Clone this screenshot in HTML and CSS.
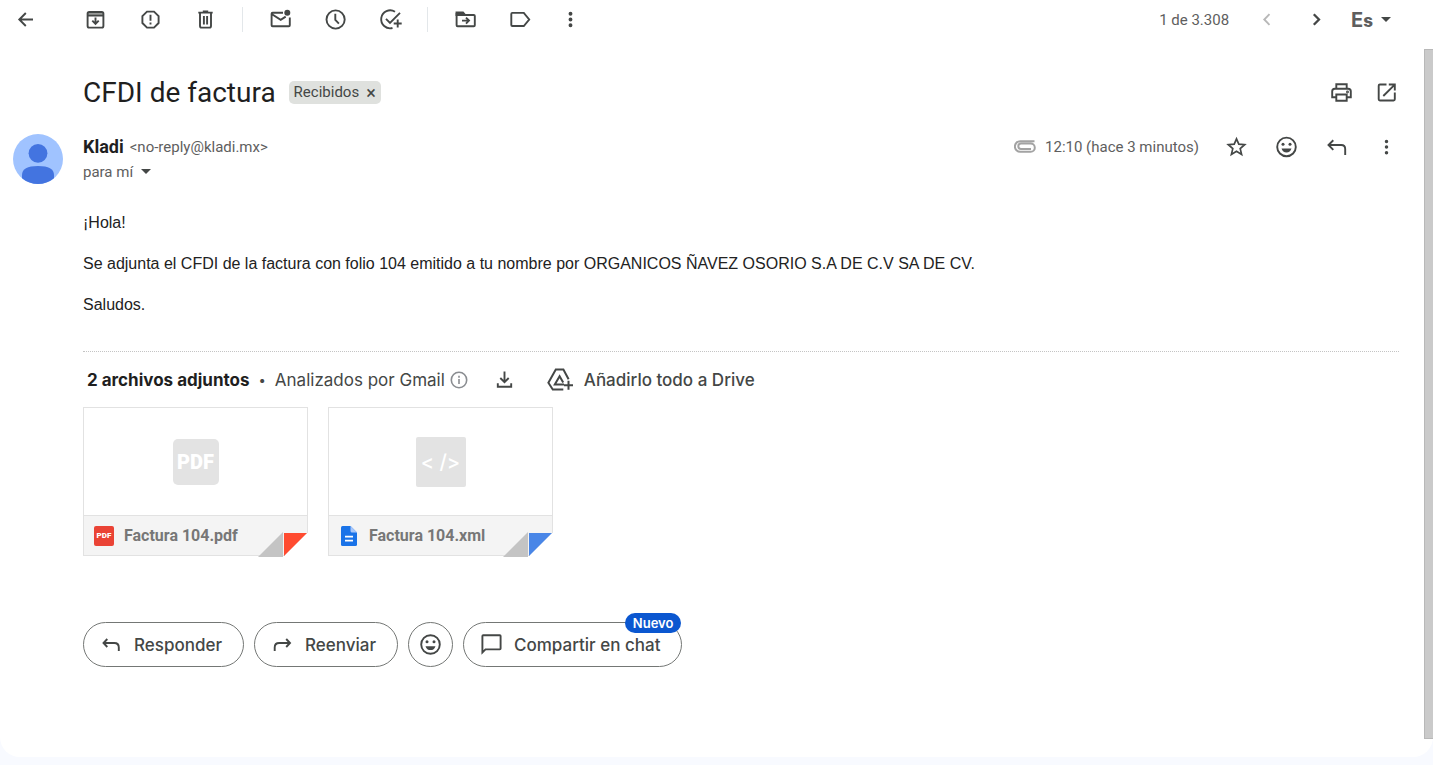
FILE: index.html
```
<!DOCTYPE html>
<html lang="es">
<head>
    <meta charset="UTF-8">
    <meta name="viewport" content="width=device-width, initial-scale=1.0">
    <title>CFDI de factura</title>
    <link rel="stylesheet" href="styles.css">
</head>
<body>
    <div class="panel">
        <!-- Toolbar -->
        <header class="toolbar">
            <button class="icon-btn back" aria-label="Volver"><svg class="icon" viewBox="0 0 25 25"><path d="M20 12.5H6.5M12.8 6l-6.5 6.5 6.5 6.5"/></svg></button>
            <div class="tool-group">
                <button class="icon-btn" aria-label="Archivar"><svg class="icon" viewBox="0 0 25 25"><rect x="4.6" y="5" width="15.8" height="15.6" rx="1.6"/><path d="M5 6.5h15" stroke-width="3" opacity=".55"/><path d="M4.6 8.6h15.8M12.5 10.5v6M9.3 13.7l3.2 3.2 3.2-3.2"/></svg></button>
                <button class="icon-btn" aria-label="Marcar como spam"><svg class="icon" viewBox="0 0 25 25"><path d="M9 4.6h7l4.6 4.6v6.8L16 20.6H9L4.400 16V9.200z"/><path d="M12.500 7.800v6M12.500 15.600v2"/></svg></button>
                <button class="icon-btn" aria-label="Eliminar"><svg class="icon" viewBox="0 0 25 25"><path d="M5.300 5.600h14.400M9.800 4.400h5.400M7 6v13q0 1.600 1.600 1.600h7.800q1.600 0 1.600-1.600V6M10.900 9v8.500M14.100 9v8.500"/></svg></button>
            </div>
            <span class="separator"></span>
            <div class="tool-group">
                <button class="icon-btn" aria-label="Marcar como no leído"><svg class="icon" viewBox="0 0 25 25"><path d="M15 5.800H4.600q-1 0-1 1v11.400q0 1 1 1h16.200q1 0 1-1V10.500M4 7.200l8.700 5.600 5-3.200"/><circle class="dot-mark" cx="19.300" cy="5.700" r="3"/></svg></button>
                <button class="icon-btn" aria-label="Posponer"><svg class="icon" viewBox="0 0 25 25"><circle cx="12.600" cy="12.500" r="9.100"/><path d="M12.300 6.800v6l3.600 3.800"/></svg></button>
                <button class="icon-btn" aria-label="Añadir a Tasks"><svg class="icon" viewBox="0 0 25 25"><path d="M17 4.700A9 9 0 1 0 14.500 21M8 11.800l4 4L22 5.800M19.700 12.500v8M15.700 16.500h8"/></svg></button>
            </div>
            <span class="separator"></span>
            <div class="tool-group">
                <button class="icon-btn" aria-label="Mover a"><svg class="icon" viewBox="0 0 25 25"><path class="solid" d="M3.500 5.500h6.500l2.200 2.600H3.500z"/><path d="M3.600 6v12.300q0 1 1 1h16.200q1 0 1-1V9q0-1-1-1H4M9 13.600h6.800M13 10.600l3 3-3 3"/></svg></button>
                <button class="icon-btn" aria-label="Etiquetas"><svg class="icon" viewBox="0 0 25 25"><path d="M4.300 5.900h11.500l5.400 6.600-5.400 6.500H4.300q-1 0-1-1V6.900q0-1 1-1z"/></svg></button>
            </div>
            <button class="icon-btn more" aria-label="Más"><svg class="icon" viewBox="0 0 25 25"><g class="solid"><circle cx="12.500" cy="6.700" r="1"/><circle cx="12.500" cy="12.500" r="1"/><circle cx="12.500" cy="18.300" r="1"/></g></svg></button>
            <div class="pager">
                <span>1 de 3.308</span>
                <button class="icon-btn" aria-label="Más reciente" disabled><svg class="icon" viewBox="0 0 25 25"><path d="M15.500 7.200l-5.200 5.300 5.200 5.300"/></svg></button>
                <button class="icon-btn" aria-label="Anterior"><svg class="icon" viewBox="0 0 25 25"><path d="M9.800 7.200l5.200 5.300-5.200 5.300" stroke-width="2.300"/></svg></button>
                <button class="language" aria-label="Herramientas de introducción de texto"><b>E<small>s</small></b><i class="caret"></i></button>
            </div>
        </header>

        <!-- Message -->
        <div class="scroll-area">
            <main class="message">
                <div class="subject">
                    <h1>CFDI de factura</h1>
                    <span class="chip"><a href="#">Recibidos</a><button aria-label="Quitar etiqueta">×</button></span>
                    <div class="subject-actions">
                        <button class="icon-btn" aria-label="Imprimir"><svg class="icon" viewBox="0 0 25 25"><path d="M7.300 8.500V4.300h10.400v4.200M6.500 17.300H3.200v-6q0-2.600 2.600-2.600h13.400q2.600 0 2.600 2.600v6h-3.300M7.300 14.500h10.400v6.200H7.300z"/><circle class="solid" cx="18.500" cy="12" r=".5"/></svg></button>
                        <button class="icon-btn" aria-label="Abrir en ventana nueva"><svg class="icon" viewBox="0 0 25 25"><path d="M12.500 4.500h-6.600q-1.200 0-1.200 1.200v13.600q0 1.200 1.200 1.200h13.700q1.200 0 1.200-1.200v-6.800M14.800 4.500h6v6M20.500 4.800L9.300 16"/></svg></button>
                    </div>
                </div>

                <div class="sender">
                    <svg class="avatar" viewBox="0 0 50 50">
                        <circle cx="25" cy="25" r="25" fill="#a0c3ff"/>
                        <circle cx="25" cy="19.300" r="9.400" fill="#4374e0"/>
                        <path d="M9 44.200V41q0-9 16-9t16 9v3.200A25 25 0 0 1 9 44.200z" fill="#4374e0"/>
                    </svg>
                    <div class="sender-info">
                        <div class="sender-name"><strong>Kladi</strong><span>&lt;no-reply@kladi.mx&gt;</span></div>
                        <button class="recipient">para mí<i class="caret"></i></button>
                    </div>
                    <div class="sender-actions">
                        <svg class="clip" viewBox="0 0 22 13"><path d="M20.500 1.200H6.200a5.200 5.200 0 0 0 0 10.600h10.500a4 4 0 0 0 0-8.200H7a2.700 2.700 0 0 0 0 5.400h10"/></svg>
                        <time>12:10 (hace 3 minutos)</time>
                        <button class="icon-btn" aria-label="Destacar"><svg class="icon" viewBox="0 0 25 25"><path d="M12.500 4.800l2.300 5.400 5.900.5-4.500 3.900 1.400 5.800-5.100-3.100-5.100 3.100 1.400-5.800-4.500-3.900 5.900-.5z" stroke-width="1.700"/></svg></button>
                        <button class="icon-btn" aria-label="Reaccionar"><svg class="icon" viewBox="0 0 25 25"><circle cx="12.500" cy="12.900" r="9.300"/><g class="face"><circle cx="9" cy="10.200" r="1.500"/><circle cx="16" cy="10.200" r="1.500"/><path d="M7.500 14.600h10q-1.300 3.900-5 3.900t-5-3.900z"/></g></svg></button>
                        <button class="icon-btn" aria-label="Responder"><svg class="icon" viewBox="0 0 25 25"><path d="M9.300 6.300L4.500 11l4.800 4.800M4.800 11h12.400q4 0 4 4v6"/></svg></button>
                        <button class="icon-btn" aria-label="Más opciones"><svg class="icon" viewBox="0 0 25 25"><g class="solid"><circle cx="12.500" cy="7.500" r=".8"/><circle cx="12.500" cy="13" r=".8"/><circle cx="12.500" cy="18.700" r=".8"/></g></svg></button>
                    </div>
                </div>

                <div class="message-body">
                    <p>¡Hola!</p>
                    <p>Se adjunta el CFDI de la factura con folio 104 emitido a tu nombre por ORGANICOS ÑAVEZ OSORIO S.A DE C.V SA DE CV.</p>
                    <p>Saludos.</p>
                </div>

                <!-- Attachments -->
                <section class="attachments">
                    <div class="attachments-header">
                        <h2>2 archivos adjuntos</h2>
                        <span class="dot">•</span>
                        <span>Analizados por Gmail</span>
                        <svg class="info" viewBox="0 0 18 18"><circle cx="9" cy="9" r="7.700"/><path d="M9 8v5M9 4.800v2"/></svg>
                        <button class="icon-btn" aria-label="Descargar todo"><svg class="icon" viewBox="0 0 25 25"><path d="M12.500 4.500v10.500M8.300 11l4.200 4.200 4.200-4.200M5.800 16.300v3.500h13.400v-3.500"/></svg></button>
                        <button class="drive"><svg viewBox="0 0 28 25"><path d="M17.300 22.500H6.800L2.400 15.800 9.800 2.500h7.600l5.200 9.700M18 17.500H8.800l4.800-8.300 3.600 6.300M22.500 13.700v9M18 18.200h9" /></svg>Añadirlo todo a Drive</button>
                    </div>
                    <div class="cards">
                        <a class="card" href="#">
                            <div class="preview"><span class="type-pdf">PDF</span></div>
                            <div class="card-name">
                                <span class="badge-pdf">PDF</span>
                                <span>Factura 104.pdf</span>
                            </div>
                            <svg class="fold red" viewBox="0 0 50 26"><path d="M0 25L25 0v25z" fill="#c4c4c4"/><path class="flap" d="M26 1h23L26 24z"/></svg>
                        </a>
                        <a class="card" href="#">
                            <div class="preview"><span class="type-xml">&lt; /&gt;</span></div>
                            <div class="card-name">
                                <svg class="doc" viewBox="0 0 20 20"><path d="M3.500 0h8L18 6.500v12q0 1.500-1.500 1.500h-13Q2 20 2 18.500v-17Q2 0 3.500 0z" fill="#1a73e8"/><path d="M11.500 0v5q0 1.500 1.500 1.500h5z" fill="#a8c7fa"/><path d="M6 10.600h8M6 14.700h8" stroke="#fff" stroke-width="1.800"/></svg>
                                <span>Factura 104.xml</span>
                            </div>
                            <svg class="fold blue" viewBox="0 0 50 26"><path d="M0 25L25 0v25z" fill="#c4c4c4"/><path class="flap" d="M26 1h23L26 24z"/></svg>
                        </a>
                    </div>
                </section>

                <!-- Reply buttons -->
                <div class="replies">
                    <button class="pill"><svg class="icon" viewBox="0 0 25 25"><path d="M8.300 7L4.500 11l3.800 4M4.800 11h10.500q4.500 0 4.500 4.500v3.500"/></svg>Responder</button>
                    <button class="pill"><svg class="icon" viewBox="0 0 25 25"><path d="M16.200 7l3.800 4-3.800 4M19.700 11H9.200q-4.500 0-4.500 4.500v3.500"/></svg>Reenviar</button>
                    <button class="pill round" aria-label="Reaccionar"><svg class="icon" viewBox="0 0 25 25"><circle cx="12.500" cy="12.500" r="9.300"/><g class="face"><circle cx="9" cy="9.800" r="1.500"/><circle cx="16" cy="9.800" r="1.500"/><path d="M7.500 14.200h10q-1.300 3.900-5 3.900t-5-3.900z"/></g></svg></button>
                    <button class="pill"><svg class="icon" viewBox="0 0 25 25"><path d="M3.400 20.500V4q0-.8.800-.8h16.600q.8 0 .8.800v12.600q0 .8-.8.800H6.500z"/></svg>Compartir en chat<span class="new">Nuevo</span></button>
                </div>
            </main>
            <div class="scrollbar"></div>
        </div>
    </div>
</body>
</html>
```
FILE: styles.css
```
* {
    box-sizing: border-box;
}

body {
    margin: 0;
    min-height: 100vh;
    display: flex;
    flex-direction: column;
    background: #f8faff;
    font-family: Roboto, Arial, sans-serif;
    font-size: 15px;
    color: #5e5e5e;
}

button {
    border: none;
    background: none;
    padding: 0;
    font: inherit;
    color: inherit;
    cursor: pointer;
}

a {
    color: inherit;
    text-decoration: none;
}

.panel {
    flex: 1;
    display: flex;
    flex-direction: column;
    margin-bottom: 8px;
    background: white;
    border-radius: 0 0 20px 20px;
}

.icon {
    display: block;
    width: 25px;
    height: 25px;
    fill: none;
    stroke: #444746;
    stroke-width: 1.9;
}

.solid {
    fill: #444746;
}

.face,
.dot-mark {
    fill: #444746;
    stroke: none;
}

.icon-btn:disabled .icon {
    stroke: #b8b8b8;
}

.caret {
    border: 5px solid transparent;
    border-top-color: #444746;
    border-bottom: none;
}

/* Toolbar */
.toolbar {
    display: flex;
    align-items: center;
    height: 49px;
    padding: 0 42px 10px 13px;
}

.back {
    margin-right: 45px;
}

.tool-group {
    display: flex;
    gap: 30px;
}

.separator {
    width: 1px;
    height: 25px;
    margin: 0 25px 0 24px;
    background: #e3e7ea;
}

.more {
    margin-left: 25px;
}

.pager {
    display: flex;
    align-items: center;
    gap: 25px;
    margin-left: auto;
}

.language {
    display: flex;
    align-items: center;
    gap: 8px;
    margin-left: -3px;
}

.language b {
    font-family: Inter, sans-serif;
    font-size: 20px;
    font-weight: 700;
}

.language small {
    font-size: 17px;
    font-weight: 800;
}

/* Message */
.scroll-area {
    flex: 1;
    display: flex;
}

.message {
    flex: 1;
    padding: 23px 25px 72px 83px;
}

.scrollbar {
    width: 9px;
    margin-bottom: 18px;
    background: #cacaca;
    border: 1px solid #b8b8b8;
    border-right: none;
}

.subject {
    display: flex;
    align-items: center;
    height: 40px;
}

.subject h1 {
    margin: 0 13px 0 0;
    font-size: 28px;
    font-weight: 400;
    color: #1f1f1f;
}

.chip {
    display: flex;
    align-items: center;
    gap: 7px;
    height: 23px;
    padding: 0 5px;
    background: #dfe1de;
    border-radius: 5px;
    color: #444746;
}

.chip button {
    font-size: 18px;
}

.subject-actions {
    display: flex;
    gap: 20px;
    margin-left: auto;
}

.sender {
    display: flex;
    margin: 22px 0 0 -70px;
}

.avatar {
    width: 50px;
    height: 50px;
    margin-right: 20px;
}

.sender-name,
.recipient {
    display: flex;
    align-items: center;
    height: 25px;
}

.sender-name {
    gap: 6px;
}

.sender-name strong {
    font-size: 18px;
    color: #1f1f1f;
}

.recipient {
    gap: 8px;
}

.sender-actions {
    display: flex;
    align-items: center;
    gap: 25px;
    height: 25px;
    margin-left: auto;
}

.clip {
    width: 22px;
    height: 13px;
    margin-right: -16px;
    fill: none;
    stroke: #a3a3a3;
    stroke-width: 2;
}

.message-body {
    margin-top: 28px;
    font-family: "Liberation Sans", Arial, sans-serif;
    font-size: 16px;
    line-height: 21px;
    color: #222;
}

.message-body p {
    margin: 0 0 20px;
}

/* Attachments */
.attachments {
    margin-top: 36px;
    border-top: 1px dotted #c4c4c4;
}

.attachments-header {
    display: flex;
    align-items: center;
    height: 55px;
    padding-left: 4px;
    font-family: Inter, sans-serif;
    font-size: 17px;
    color: #444746;
}

.attachments-header h2 {
    margin: 0;
    font-size: 17px;
    font-weight: 700;
    color: #1f1f1f;
}

.dot {
    margin: 0 9px;
    font-size: 13px;
}

.info {
    width: 18px;
    height: 18px;
    margin: 0 24px 0 5px;
    fill: none;
    stroke: #8a8d91;
    stroke-width: 1.6;
}

.drive {
    display: flex;
    align-items: center;
    gap: 10px;
    margin-left: 29px;
    font-weight: 500;
}

.drive svg {
    width: 28px;
    height: 25px;
    fill: none;
    stroke: #444746;
    stroke-width: 2;
}

.cards {
    display: flex;
    gap: 20px;
}

.card {
    position: relative;
    width: 225px;
    border: 1px solid #e2e2e2;
    color: #777;
}

.preview {
    display: flex;
    align-items: center;
    justify-content: center;
    height: 107px;
}

.type-pdf,
.type-xml {
    display: flex;
    align-items: center;
    justify-content: center;
    width: 46px;
    height: 46px;
    background: #e3e3e3;
    border-radius: 5px;
    font-size: 20px;
    font-weight: 900;
    color: white;
}

.type-xml {
    width: 50px;
    height: 50px;
    border-radius: 2px;
    font-family: Inter, sans-serif;
    font-weight: 500;
}

.card-name {
    display: flex;
    align-items: center;
    gap: 10px;
    height: 40px;
    padding-left: 10px;
    border-top: 1px solid #e2e2e2;
    background: #f4f4f4;
    font-size: 16px;
    font-weight: 700;
}

.badge-pdf {
    width: 20px;
    height: 20px;
    background: #ea4335;
    border-radius: 2px;
    font-size: 8px;
    font-weight: 900;
    line-height: 20px;
    text-align: center;
    color: white;
}

.doc {
    width: 20px;
    height: 20px;
}

.fold {
    position: absolute;
    right: -1px;
    bottom: -3px;
    width: 50px;
    height: 26px;
    background: linear-gradient(135deg, transparent 50%, white 50%) right / 25px 25px no-repeat;
}

.red .flap {
    fill: #ff4b30;
}

.blue .flap {
    fill: #4986e7;
}

/* Reply buttons */
.replies {
    display: flex;
    gap: 10px;
    margin-top: 66px;
}

.pill {
    position: relative;
    display: flex;
    align-items: center;
    gap: 10px;
    height: 45px;
    padding: 0 21px 0 15px;
    border: 1px solid #747775;
    border-radius: 23px;
    font-family: Inter, sans-serif;
    font-size: 17px;
    font-weight: 500;
    color: #444746;
}

.round {
    width: 45px;
    padding: 0 9px;
}

.new {
    position: absolute;
    top: -10px;
    right: 0;
    padding: 0 8px;
    border-radius: 10px;
    background: #0b57d0;
    font-size: 13px;
    font-weight: 600;
    line-height: 20px;
    color: white;
}
```
